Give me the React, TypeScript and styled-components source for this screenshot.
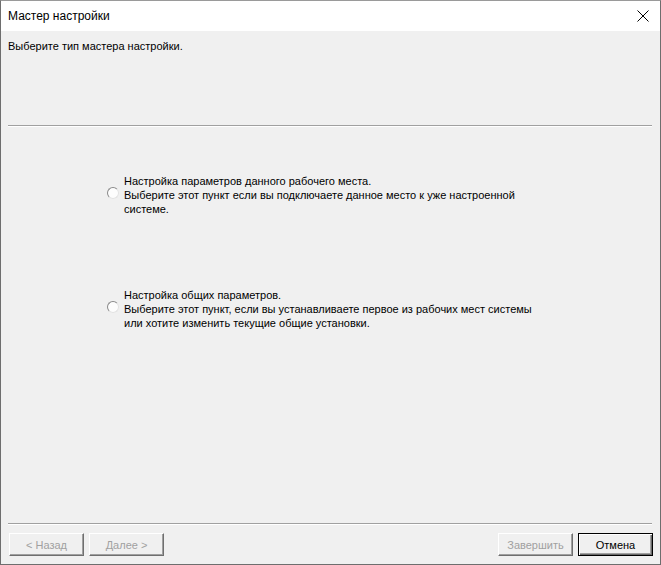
import styled, { createGlobalStyle } from 'styled-components'

const GlobalStyle = createGlobalStyle`
  html, body {
    margin: 0;
    padding: 0;
    background: #f0f0f0;
  }
  body {
    font-family: 'Liberation Sans', Arial, sans-serif;
    font-size: 11px;
    color: #000;
  }
`

const Window = styled.div`
  width: 661px;
  height: 565px;
  box-sizing: border-box;
  border: 1px solid #6e6e6e;
  border-top-color: #9a9a9a;
  display: flex;
  flex-direction: column;
  background: #f0f0f0;
`

const TitleBar = styled.div`
  height: 30px;
  background: #fff;
  display: flex;
  align-items: center;
  justify-content: space-between;
  padding: 0 9px 0 7px;
`

const Title = styled.span`
  font-size: 12px;
  color: #000;
`

const CloseButton = styled.div`
  width: 14px;
  height: 14px;
  display: flex;
  align-items: center;
  justify-content: center;
  margin-right: 1px;
`

const Header = styled.div`
  height: 86px;
  padding: 8px 7px 0;
  line-height: 14px;
`

const Separator = styled.div`
  margin: 0 8px 0 7px;
  height: 1px;
  background: #a0a0a0;
  border-bottom: 1px solid #fff;
`

const Content = styled.div`
  flex: 1;
  display: flex;
  flex-direction: column;
  gap: 72px;
  padding: 47px 0 0 106px;
`

const Option = styled.label`
  display: flex;
  align-items: center;
  gap: 5px;
`

const Radio = styled.span`
  width: 12px;
  height: 12px;
  box-sizing: border-box;
  border-radius: 50%;
  border: 1px solid;
  border-color: #8a8a8a #e3e3e3 #e3e3e3 #8a8a8a;
  background: #fdfdfd;
  margin-bottom: 5px;
  flex: none;
`

const OptionText = styled.div`
  line-height: 14px;
  width: 418px;
`

const Footer = styled.div`
  display: flex;
  align-items: center;
  padding: 8px 7px 8px 8px;
  gap: 5px;
`

const Spacer = styled.div`
  flex: 1;
`

const Button = styled.button<{ $default?: boolean }>`
  width: 75px;
  height: 23px;
  padding: 0;
  font-family: 'Liberation Sans', Arial, sans-serif;
  font-size: 11px;
  background: #f0f0f0;
  color: ${p => (p.disabled ? '#a0a0a0' : '#000')};
  border: 1px solid ${p => (p.$default ? '#000' : 'transparent')};
  box-shadow: ${p =>
    p.$default
      ? 'inset 1px 1px #fff, inset -1px -1px #696969, inset -2px -2px #a0a0a0'
      : 'inset 1px 1px #fff, inset -1px -1px #a0a0a0'};
  outline: none;
  border-radius: 0;
`

const DisabledButton = styled(Button)`
  border: 1px solid;
  border-color: #fff #6f6f6f #6f6f6f #fff;
  box-shadow: inset -1px -1px #a0a0a0;
`

export default function App() {
  return (
    <>
      <GlobalStyle />
      <Window>
        <TitleBar>
          <Title>Мастер настройки</Title>
          <CloseButton>
            <svg width="12" height="12" viewBox="0 0 12 12">
              <path d="M0.5 0.5 L11.5 11.5 M11.5 0.5 L0.5 11.5" stroke="#000" strokeWidth="1" />
            </svg>
          </CloseButton>
        </TitleBar>
        <Header>Выберите тип мастера настройки.</Header>
        <Separator />
        <Content>
          <Option>
            <Radio />
            <OptionText>
              Настройка параметров данного рабочего места.
              <br />
              Выберите этот пункт если вы подключаете данное место к уже настроенной системе.
            </OptionText>
          </Option>
          <Option>
            <Radio />
            <OptionText>
              Настройка общих параметров.
              <br />
              Выберите этот пункт, если вы устанавливаете первое из рабочих мест системы или хотите изменить текущие общие установки.
            </OptionText>
          </Option>
        </Content>
        <Separator />
        <Footer>
          <DisabledButton disabled>&lt; Назад</DisabledButton>
          <DisabledButton disabled>Далее &gt;</DisabledButton>
          <Spacer />
          <DisabledButton disabled>Завершить</DisabledButton>
          <Button $default>Отмена</Button>
        </Footer>
      </Window>
    </>
  )
}
